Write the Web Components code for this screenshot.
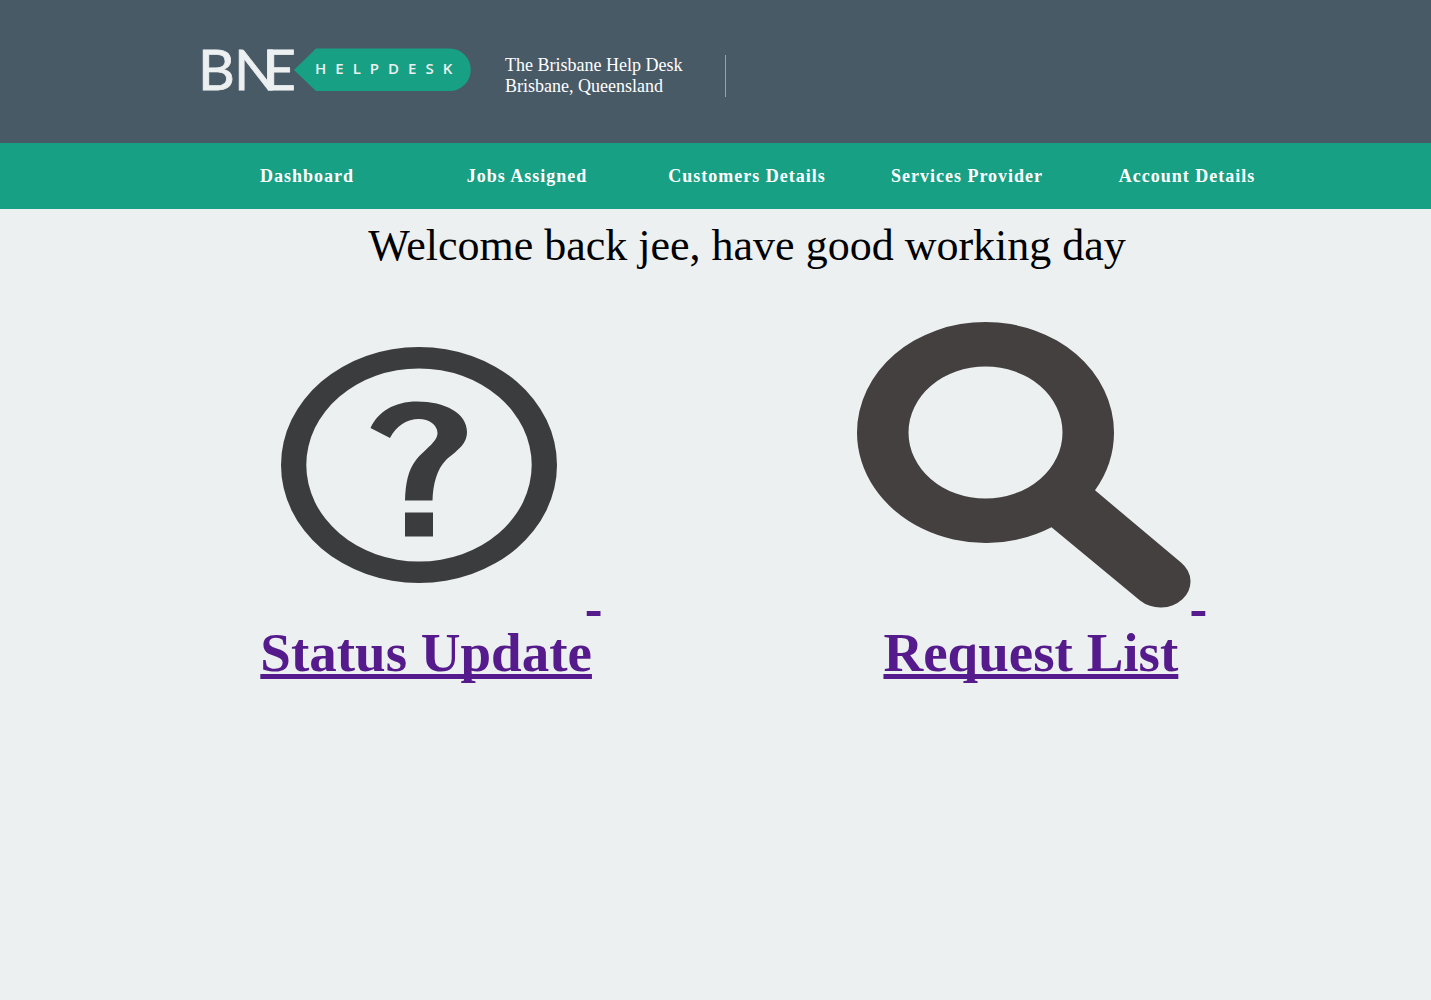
<!DOCTYPE html>
<html lang="en">
<head>
<meta charset="utf-8">
<title>BNE Helpdesk</title>
<style>
  body { margin: 0; background: #ecf0f1; font-family: "Liberation Serif", "Times New Roman", serif; color: #000; }
</style>
</head>
<body>
<helpdesk-app></helpdesk-app>
<script>
class BneLogo extends HTMLElement {
  constructor() {
    super();
    this.attachShadow({ mode: "open" }).innerHTML = `
      <style>
        :host { display: block; }
        svg { display: block; overflow: visible; }
        .brand { font: 400 57px Lato, sans-serif; fill: #ecf0f1; stroke: #ecf0f1; stroke-width: 0.8; }
        .tag { font: 600 15px "Open Sans", "Noto Sans", sans-serif; letter-spacing: 9px; fill: #ecf0f1; }
      </style>
      <svg width="268" height="44" viewBox="0 0 268 44" role="img" aria-label="BNE Helpdesk">
        <path d="M91 22 113 0.5H246.500A21.250 21.250 0 0 1 246.500 43H113Z" fill="#18a085"/>
        <text class="brand" y="42" x="-5 31 60">BNE</text>
        <text class="tag" x="112" y="26">HELPDESK</text>
      </svg>`;
  }
}
customElements.define("bne-logo", BneLogo);

class SiteHeader extends HTMLElement {
  constructor() {
    super();
    this.attachShadow({ mode: "open" }).innerHTML = `
      <style>
        :host { display: block; background: #495a67; color: #fff; }
        header { display: flex; align-items: flex-start; box-sizing: border-box; max-width: 1025px; margin: 0 auto; padding: 48px 0 46px; }
        p { box-sizing: border-box; width: 221px; margin: 7px 0 0 34px; border-right: 1px solid #95a5a6; font-size: 18px; line-height: 21px; }
      </style>
      <header><bne-logo></bne-logo><p><slot></slot></p></header>`;
  }
}
customElements.define("site-header", SiteHeader);

class MainNav extends HTMLElement {
  constructor() {
    super();
    this.attachShadow({ mode: "open" }).innerHTML = `
      <style>
        :host { display: block; background: #18a085; padding-left: 63px; }
        nav { display: flex; max-width: 1100px; margin: 0 auto; }
      </style>
      <nav aria-label="Main"><slot></slot></nav>`;
  }
}
customElements.define("main-nav", MainNav);

class NavItem extends HTMLElement {
  constructor() {
    super();
    this.attachShadow({ mode: "open" }).innerHTML = `
      <style>
        :host { display: block; flex: 1; }
        a { display: block; padding: 22px 0; text-align: center; color: #fff; text-decoration: none; font-size: 18px; font-weight: bold; line-height: 22px; letter-spacing: 1px; }
      </style>
      <a href="#"><slot></slot></a>`;
  }
}
customElements.define("nav-item", NavItem);

const PICTURES = {
  question: `
    <path fill-rule="evenodd" d="M29 143A138 118 0 0 1 305 143A138 118 0 0 1 29 143ZM54.300 143A112.700 96.500 0 0 0 279.700 143A112.700 96.500 0 0 0 54.300 143Z" fill="#3b3c3e"/>
    <path d="M118.500 106C126 90 142 79.500 165 79.500C193 79.500 215 91 215 110C215 123 204 129 194 138C185 147 181 162 180.500 178.500H153C153.500 162 156 148 164 138C173 127 185.500 120 185.500 111C185.500 103 177 97 167 97C155 97 144 104 138 116Z" fill="#3b3c3e"/>
    <path d="M153 190.500H181V214.500H153Z" fill="#3b3c3e"/>`,
  search: `
    <path fill-rule="evenodd" d="M0 110.500A128.500 110.500 0 0 1 257 110.500A128.500 110.500 0 0 1 238 168.300L324 240.500A30 26 0 0 1 283 278.500L194.500 205.300A128.500 110.500 0 0 1 0 110.500ZM51.500 110.500A77 66 0 0 0 205.500 110.500A77 66 0 0 0 51.500 110.500Z" fill="#44403f"/>`
};
class ActionTile extends HTMLElement {
  constructor() {
    super();
    this.attachShadow({ mode: "open" }).innerHTML = `
      <style>
        :host { display: block; text-align: center; }
        h2 { margin: 0; font-size: 55px; line-height: 63px; }
        a { color: #551a8b; text-decoration: underline; text-decoration-thickness: 5px; text-decoration-skip-ink: none; }
        svg { display: inline-block; vertical-align: baseline; }
      </style>
      <h2><a href="#"><svg width="335" height="286" viewBox="0 0 335 286" aria-hidden="true"></svg>&nbsp;<br><slot></slot></a></h2>`;
  }
  connectedCallback() {
    this.shadowRoot.querySelector("svg").innerHTML = PICTURES[this.getAttribute("picture")];
  }
}
customElements.define("action-tile", ActionTile);

class WelcomeTitle extends HTMLElement {
  constructor() {
    super();
    this.attachShadow({ mode: "open" }).innerHTML = `
      <style>
        :host { display: block; padding: 12px 0 0 63px; text-align: center; }
        h1 { margin: 0; font-size: 44px; line-height: 50px; font-weight: normal; }
      </style>
      <h1><slot></slot></h1>`;
  }
}
customElements.define("welcome-title", WelcomeTitle);

class HelpdeskApp extends HTMLElement {
  constructor() {
    super();
    this.attachShadow({ mode: "open" }).innerHTML = `
      <style>
        :host { display: block; }
        .tiles { display: flex; flex-wrap: wrap; justify-content: center; gap: 48px 256px; padding: 51px 0 48px 26px; }
      </style>
      <site-header>The Brisbane Help Desk<br>Brisbane, Queensland</site-header>
      <main-nav>
        <nav-item>Dashboard</nav-item>
        <nav-item>Jobs Assigned</nav-item>
        <nav-item>Customers Details</nav-item>
        <nav-item>Services Provider</nav-item>
        <nav-item>Account Details</nav-item>
      </main-nav>
      <main>
        <welcome-title>Welcome back jee, have good working day</welcome-title>
        <div class="tiles">
          <action-tile picture="question">Status Update</action-tile>
          <action-tile picture="search">Request List</action-tile>
        </div>
      </main>`;
  }
}
customElements.define("helpdesk-app", HelpdeskApp);
</script>
</body>
</html>
